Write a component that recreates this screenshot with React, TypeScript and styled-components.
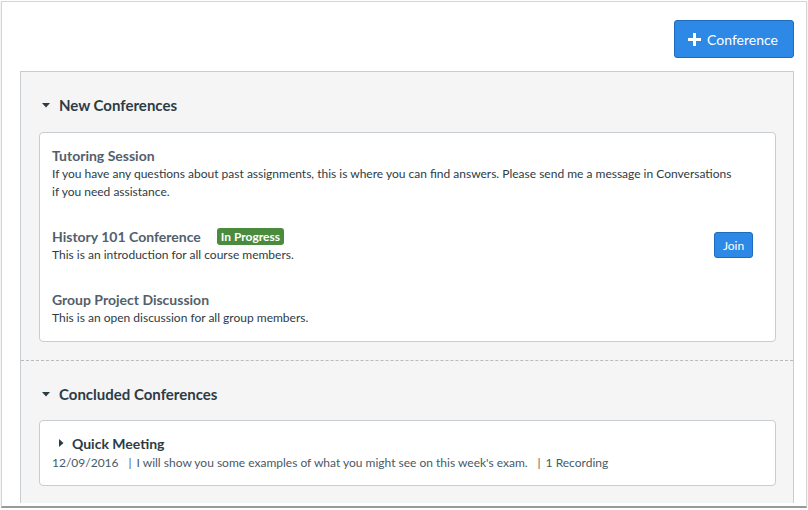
import React from 'react'
import styled, { createGlobalStyle } from 'styled-components'

const GlobalStyle = createGlobalStyle`
  html, body {
    margin: 0;
    padding: 0;
    background: #fff;
  }
  body {
    font-family: Lato, "Open Sans", "Liberation Sans", sans-serif;
    color: #2d3b45;
  }
`

interface Conference {
  id: string
  title: string
  description: string
  inProgress?: boolean
}

const newConferences: Conference[] = [
  {
    id: 'tutoring',
    title: 'Tutoring Session',
    description:
      'If you have any questions about past assignments, this is where you can find answers. Please send me a message in Conversations if you need assistance.'
  },
  {
    id: 'history',
    title: 'History 101 Conference',
    description: 'This is an introduction for all course members.',
    inProgress: true
  },
  {
    id: 'group',
    title: 'Group Project Discussion',
    description: 'This is an open discussion for all group members.'
  }
]

const Caret: React.FC<{ dir: 'down' | 'right' }> = ({ dir }) => (
  <CaretSvg viewBox="0 0 10 10" width="10" height="10">
    {dir === 'down' ? (
      <polygon points="1,3 9,3 5,7.5" fill="#2d3b45" />
    ) : (
      <polygon points="3,1 7.5,5 3,9" fill="#2d3b45" />
    )}
  </CaretSvg>
)

export default function App() {
  return (
    <>
      <GlobalStyle />
      <Frame>
        <TopBar>
          <PrimaryButton>
            <svg width="13" height="13" viewBox="0 0 13 13">
              <rect x="5" y="0" width="3" height="13" fill="#fff" />
              <rect x="0" y="5" width="13" height="3" fill="#fff" />
            </svg>
            Conference
          </PrimaryButton>
        </TopBar>

        <Panel>
          <Section $divided $bottom={18}>
            <SectionHeader>
              <Caret dir="down" />
              New Conferences
            </SectionHeader>
            <Card $pad="12px 22px 14px 12px">
              <ItemList>
                {newConferences.map((c) => (
                  <Item key={c.id}>
                    <ItemText>
                      <TitleRow>
                        <ItemTitle>{c.title}</ItemTitle>
                        {c.inProgress && <Badge>In Progress</Badge>}
                      </TitleRow>
                      <ItemDesc>{c.description}</ItemDesc>
                    </ItemText>
                    {c.inProgress && <JoinButton>Join</JoinButton>}
                  </Item>
                ))}
              </ItemList>
            </Card>
          </Section>

          <Section $bottom={17} $gap={14}>
            <SectionHeader>
              <Caret dir="down" />
              Concluded Conferences
            </SectionHeader>
            <Card $pad="12px 22px 13px 12px">
              <ConcludedTitle>
                <Caret dir="right" />
                Quick Meeting
              </ConcludedTitle>
              <Meta>
                <span>12/09/2016</span>
                <Pipe>|</Pipe>
                <span>I will show you some examples of what you might see on this week's exam.</span>
                <Pipe>|</Pipe>
                <span>1 Recording</span>
              </Meta>
            </Card>
          </Section>
        </Panel>
      </Frame>
    </>
  )
}

const Frame = styled.div`
  box-sizing: border-box;
  margin: 1px 0 0 1px;
  width: 806px;
  height: 507px;
  border: 1px solid #d4d4d4;
  border-bottom: 2px solid #9a9a9a;
  box-shadow: 0 1px 1px rgba(0, 0, 0, 0.25);
  padding: 18px 12px 0 18px;
  overflow: hidden;
  display: flex;
  flex-direction: column;
`

const TopBar = styled.div`
  display: flex;
  justify-content: flex-end;
  margin-bottom: 13px;
`

const PrimaryButton = styled.button`
  box-sizing: border-box;
  height: 38px;
  width: 120px;
  display: flex;
  align-items: center;
  justify-content: center;
  gap: 6px;
  background: #2d89e5;
  border: 1px solid #1f6cbd;
  border-radius: 3px;
  color: #fff;
  font-family: Lato, "Liberation Sans", sans-serif;
  font-size: 14px;
  padding: 0 12px 0 10px;
  cursor: pointer;
`

const Panel = styled.div`
  background: #f5f5f5;
  border: 1px solid #c7cdd1;
  border-bottom: none;
`

const Section = styled.div<{ $divided?: boolean; $bottom: number; $gap?: number }>`
  padding: 21px 17px ${(p) => p.$bottom}px 18px;
  border-bottom: ${(p) => (p.$divided ? '1px dashed #b8bcbf' : 'none')};

  & > div:first-child {
    margin-bottom: ${(p) => p.$gap ?? 15}px;
  }
`

const SectionHeader = styled.div`
  display: flex;
  align-items: center;
  gap: 8px;
  height: 24px;
  padding-left: 2px;
  font-size: 15px;
  font-weight: 700;
  color: #2d3b45;
`

const CaretSvg = styled.svg`
  flex-shrink: 0;
`

const Card = styled.div<{ $pad: string }>`
  background: #fff;
  border: 1px solid #c7cdd1;
  border-radius: 4px;
  padding: ${(p) => p.$pad};
`

const ItemList = styled.div`
  display: flex;
  flex-direction: column;
  gap: 25px;
`

const Item = styled.div`
  display: flex;
  align-items: center;
  justify-content: space-between;
`

const ItemText = styled.div`
  max-width: 682px;
`

const TitleRow = styled.div`
  display: flex;
  align-items: center;
  gap: 16px;
  height: 20px;
`

const ItemTitle = styled.div`
  font-size: 14px;
  font-weight: 700;
  color: #52606c;
`

const Badge = styled.span`
  background: #4a8b3d;
  color: #fff;
  font-size: 12px;
  font-weight: 700;
  line-height: 17px;
  padding: 0 4px;
  border-radius: 3px;
`

const ItemDesc = styled.div`
  font-size: 12px;
  line-height: 18px;
  color: #2d3b45;
`

const JoinButton = styled.button`
  box-sizing: border-box;
  height: 26px;
  width: 39px;
  background: #2d89e5;
  border: 1px solid #1f6cbd;
  border-radius: 3px;
  color: #fff;
  font-family: Lato, "Liberation Sans", sans-serif;
  font-size: 12px;
  padding: 0;
  cursor: pointer;
`

const ConcludedTitle = styled.div`
  display: flex;
  align-items: center;
  gap: 6px;
  height: 20px;
  padding-left: 4px;
  font-size: 14px;
  font-weight: 700;
  color: #2d3b45;
`

const Meta = styled.div`
  display: flex;
  align-items: center;
  margin-top: 1px;
  font-size: 12px;
  line-height: 18px;
  color: #4a5966;
`

const Pipe = styled.span`
  margin: 0 5px 0 10px;
`
